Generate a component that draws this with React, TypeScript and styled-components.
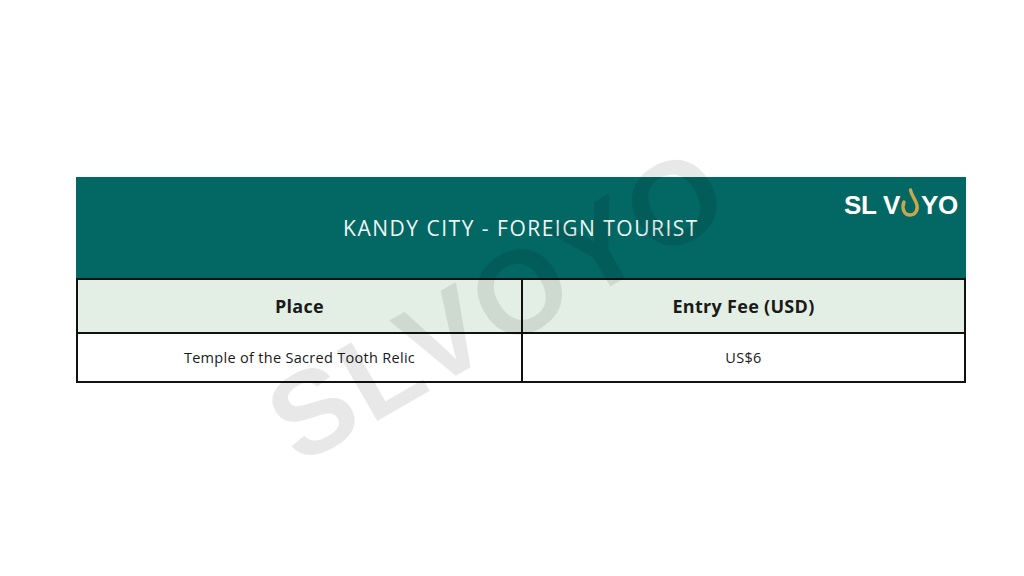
import styled, { createGlobalStyle } from "styled-components";

const GlobalStyle = createGlobalStyle`
  html, body {
    margin: 0;
    padding: 0;
    background: #ffffff;
    font-family: "Open Sans", "Noto Sans", sans-serif;
  }
`;

const Page = styled.div`
  position: relative;
  width: 1024px;
  height: 576px;
  overflow: hidden;
  padding: 177px 58px 0 76px;
  box-sizing: border-box;
`;

const Card = styled.div`
  width: 890px;
  display: flex;
  flex-direction: column;
`;

const Banner = styled.div`
  position: relative;
  height: 101px;
  background: #036763;
  display: flex;
  align-items: center;
  justify-content: center;
`;

const Title = styled.h1`
  margin: 0;
  color: #eef6f3;
  font-size: 21px;
  font-weight: 400;
  letter-spacing: 1.5px;
`;

const Logo = styled.div`
  position: absolute;
  top: 13px;
  right: 8px;
  display: flex;
  align-items: center;
  font-family: "Liberation Sans", Arial, sans-serif;
  font-weight: 700;
  font-size: 26px;
  color: #ffffff;
  letter-spacing: -0.3px;
`;

const Table = styled.div`
  display: grid;
  grid-template-columns: 445px 1fr;
  border: 2px solid #111;
`;

const Cell = styled.div<{ $head?: boolean; $last?: boolean }>`
  height: ${(p) => (p.$head ? "52px" : "47px")};
  display: flex;
  align-items: center;
  justify-content: center;
  background: ${(p) => (p.$head ? "#e3efe5" : "#ffffff")};
  border-right: ${(p) => (p.$last ? "none" : "2px solid #111")};
  border-bottom: ${(p) => (p.$head ? "2px solid #111" : "none")};
  color: #1a1a1a;
  font-size: ${(p) => (p.$head ? "18px" : "14.5px")};
  font-weight: ${(p) => (p.$head ? 700 : 400)};
  letter-spacing: 0.3px;
`;

const Watermark = styled.div`
  position: absolute;
  left: 498px;
  top: 304px;
  transform: translate(-50%, -50%) rotate(-30deg);
  font-family: "Liberation Sans", Arial, sans-serif;
  font-weight: 700;
  font-size: 118px;
  letter-spacing: 4px;
  color: rgba(0, 0, 0, 0.09);
  white-space: nowrap;
  pointer-events: none;
`;

const Drop = () => (
  <svg width="20" height="30" viewBox="0 0 20 30" style={{ margin: "-6px 1px 0 0" }}>
    <path
      d="M4 14 C1.5 20, 4 27, 10 27 C16 27, 18.5 21, 16.5 15.5 C15 11, 11.5 7.5, 10.5 2"
      fill="none"
      stroke="#c9a84a"
      strokeWidth="3.4"
      strokeLinecap="round"
    />
  </svg>
);

export default function App() {
  return (
    <>
      <GlobalStyle />
      <Page>
        <Card>
          <Banner>
            <Title>KANDY CITY - FOREIGN TOURIST</Title>
            <Logo>
              <span>SL V</span>
              <Drop />
              <span>YO</span>
            </Logo>
          </Banner>
          <Table>
            <Cell $head>Place</Cell>
            <Cell $head $last>Entry Fee (USD)</Cell>
            <Cell>Temple of the Sacred Tooth Relic</Cell>
            <Cell $last>US$6</Cell>
          </Table>
        </Card>
        <Watermark>SLVOYO</Watermark>
      </Page>
    </>
  );
}
